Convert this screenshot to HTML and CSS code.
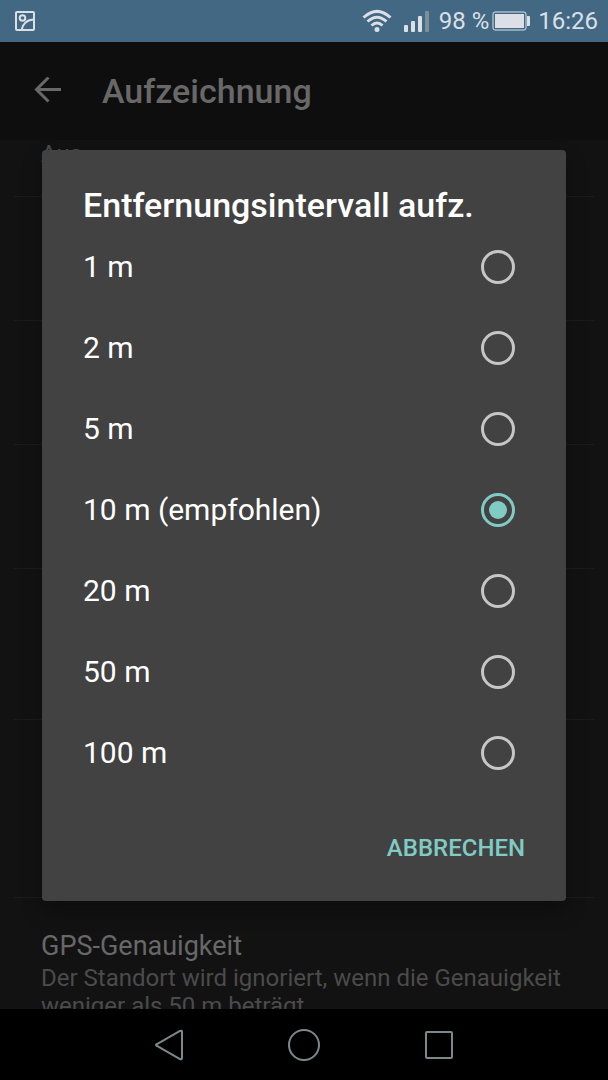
FILE: index.html
```
<!DOCTYPE html>
<html lang="de">
<head>
<meta charset="UTF-8">
<meta name="viewport" content="width=device-width, initial-scale=1">
<title>Aufzeichnung</title>
<link rel="stylesheet" href="styles.css">
</head>

<body>

<div class="statusbar">
	<svg class="picture" width="20" height="20" viewBox="0 0 20 20">
		<rect x="1" y="1" width="18" height="18" rx="1"/>
		<circle cx="7.5" cy="7" r="2.8"/>
		<path d="M6.5 19C7.500 13 12 8.500 19 8.500"/>
	</svg>
	<div class="indicators">
		<svg class="wifi" width="30" height="24" viewBox="0 0 30 24">
			<path d="M1.500 8.500Q15-3.800 28.500 8.500M5.500 12.500Q15 4 24.500 12.500M9.500 16.500Q15 11.600 20.500 16.500"/>
			<circle cx="15" cy="20.500" r="2.500"/>
		</svg>
		<svg class="signal" width="26" height="22" viewBox="0 0 26 22">
			<rect x="0" y="15" width="4" height="7" rx="1"/>
			<rect x="7" y="11" width="4" height="11" rx="1"/>
			<rect x="14" y="6" width="4" height="16" rx="1"/>
			<rect class="off" x="21" y="1" width="4" height="21" rx="1"/>
		</svg>
		<span>98 %</span>
		<svg class="battery" width="38" height="20" viewBox="0 0 38 20">
			<rect class="case" x="1" y="1" width="33" height="18" rx="2"/>
			<rect x="3" y="3" width="29" height="14"/>
			<path d="M35 5h2q1 0 1 1v8q0 1-1 1h-2z"/>
		</svg>
		<span class="clock">16:26</span>
	</div>
</div><!-- statusbar -->

<div class="screen">
	<div class="appbar">
		<a class="back" href="#" aria-label="Zurück">
			<svg width="28" height="28" viewBox="0 0 28 28"><path d="M27 12.500H2M14.500 0.500L2.500 12.500L14.500 24.500"/></svg>
		</a>
		<h1>Aufzeichnung</h1>
	</div>

	<ul class="settings">
		<li class="first"><p>Aus</p></li>
		<li></li>
		<li></li>
		<li></li>
		<li class="tall"></li>
		<li class="taller"></li>
		<li class="accuracy">
			<h2>GPS-Genauigkeit</h2>
			<p>Der Standort wird ignoriert, wenn die Genauigkeit weniger als 50 m beträgt.</p>
		</li>
	</ul>

	<div class="overlay">
		<form class="dialog" role="dialog" aria-labelledby="dialog-title">
			<h2 id="dialog-title">Entfernungsintervall aufz.</h2>
			<label for="d1">1 m <input type="radio" name="distance" id="d1"></label>
			<label for="d2">2 m <input type="radio" name="distance" id="d2"></label>
			<label for="d5">5 m <input type="radio" name="distance" id="d5"></label>
			<label for="d10">10 m (empfohlen) <input type="radio" name="distance" id="d10" checked></label>
			<label for="d20">20 m <input type="radio" name="distance" id="d20"></label>
			<label for="d50">50 m <input type="radio" name="distance" id="d50"></label>
			<label for="d100">100 m <input type="radio" name="distance" id="d100"></label>
			<div class="actions">
				<button type="button">ABBRECHEN</button>
			</div>
		</form>
	</div>
</div><!-- screen -->

<div class="navbar">
	<button type="button" aria-label="Zurück">
		<svg width="36" height="36" viewBox="0 0 36 36"><path d="M29 4Q31 3 31 5V31Q31 33 29 32L6 19Q4 18 6 17Z"/></svg>
	</button>
	<button type="button" aria-label="Startseite">
		<svg width="36" height="36" viewBox="0 0 36 36"><circle cx="18" cy="18" r="15"/></svg>
	</button>
	<button type="button" aria-label="Übersicht">
		<svg width="36" height="36" viewBox="0 0 36 36"><rect x="5" y="5" width="26" height="26" rx="1"/></svg>
	</button>
</div><!-- navbar -->

</body>
</html>
```
FILE: styles.css
```
* {
	box-sizing: border-box;
}

body {
	display: flex;
	flex-direction: column;
	height: 100vh;
	margin: 0;
	font-family: Roboto, "Liberation Sans", sans-serif;
	background: #121212;
}

h1, h2, p, ul {
	margin: 0;
	padding: 0;
}

button {
	padding: 0;
	border: none;
	background: none;
	font-family: inherit;
}

/* status bar */
.statusbar {
	display: flex;
	justify-content: space-between;
	align-items: center;
	height: 42px;
	padding: 0 10px 0 15px;
	background: #426884;
	color: #dce0e6;
	font-size: 24px;
}

.statusbar svg {
	fill: #dce0e6;
}

.statusbar .picture,
.battery .case {
	fill: none;
	stroke: #dce0e6;
	stroke-width: 2;
}

.battery .case {
	stroke-width: 1;
}

.indicators {
	display: flex;
	align-items: center;
	line-height: 44px;
}

.wifi {
	margin-right: 12px;
}

.wifi path {
	fill: none;
	stroke: #dce0e6;
	stroke-width: 3;
}

.signal {
	margin-right: 9px;
}

.signal .off {
	fill: #7b9196;
}

.battery {
	margin: 0 8px 0 3px;
}

/* settings behind the dialog */
.screen {
	position: relative;
	flex: 1;
	overflow: hidden;
}

.appbar {
	display: flex;
	align-items: center;
	height: 98px;
	padding-left: 34px;
	background: #0e0e0e;
	color: #686868;
}

.back {
	height: 28px;
	margin-right: 40px;
}

.back path {
	fill: none;
	stroke: #686868;
	stroke-width: 3;
}

.appbar h1 {
	font-size: 34px;
	font-weight: 500;
}

.settings {
	list-style: none;
}

.settings li {
	height: 124px;
	margin: 0 14px;
	padding: 0 27px;
	border-bottom: 1px solid #1c1c1c;
}

.settings .first {
	height: 57px;
}

.settings .tall {
	height: 151px;
}

.settings .taller {
	height: 178px;
}

.settings .accuracy {
	padding-top: 30px;
	border: none;
}

.settings h2 {
	color: #686868;
	font-size: 27px;
	font-weight: 400;
	line-height: 36px;
}

.settings p {
	color: #4b4b4b;
	font-size: 24px;
	line-height: 28px;
}

/* dialog */
.overlay {
	position: absolute;
	inset: 0;
	display: flex;
	align-items: center;
	padding: 0 42px;
}

.dialog {
	flex: 1;
	padding-top: 34px;
	border-radius: 4px;
	background: #424242;
	box-shadow: 0 10px 20px rgba(0, 0, 0, 0.3);
	color: #fff;
}

.dialog h2 {
	padding: 0 41px;
	font-size: 34px;
	font-weight: 500;
	line-height: 42px;
}

.dialog label {
	display: flex;
	justify-content: space-between;
	align-items: center;
	height: 81px;
	padding: 0 51px 0 41px;
	font-size: 30px;
}

.dialog input {
	width: 34px;
	height: 34px;
	margin: 0;
	border: 3px solid #c6c6c6;
	border-radius: 50%;
	appearance: none;
}

.dialog input:checked {
	padding: 5px;
	border-color: #80cbc4;
	background: #80cbc4 content-box;
}

.actions {
	display: flex;
	justify-content: flex-end;
	padding: 33px 41px 31px;
}

.actions button {
	height: 44px;
	color: #80cbc4;
	font-size: 24px;
	font-weight: 500;
}

/* navigation keys */
.navbar {
	display: flex;
	justify-content: center;
	align-items: center;
	gap: 99px;
	height: 71px;
	background: #000;
}

.navbar button {
	height: 36px;
}

.navbar svg {
	fill: none;
	stroke: #7c898b;
	stroke-width: 2;
}
```
